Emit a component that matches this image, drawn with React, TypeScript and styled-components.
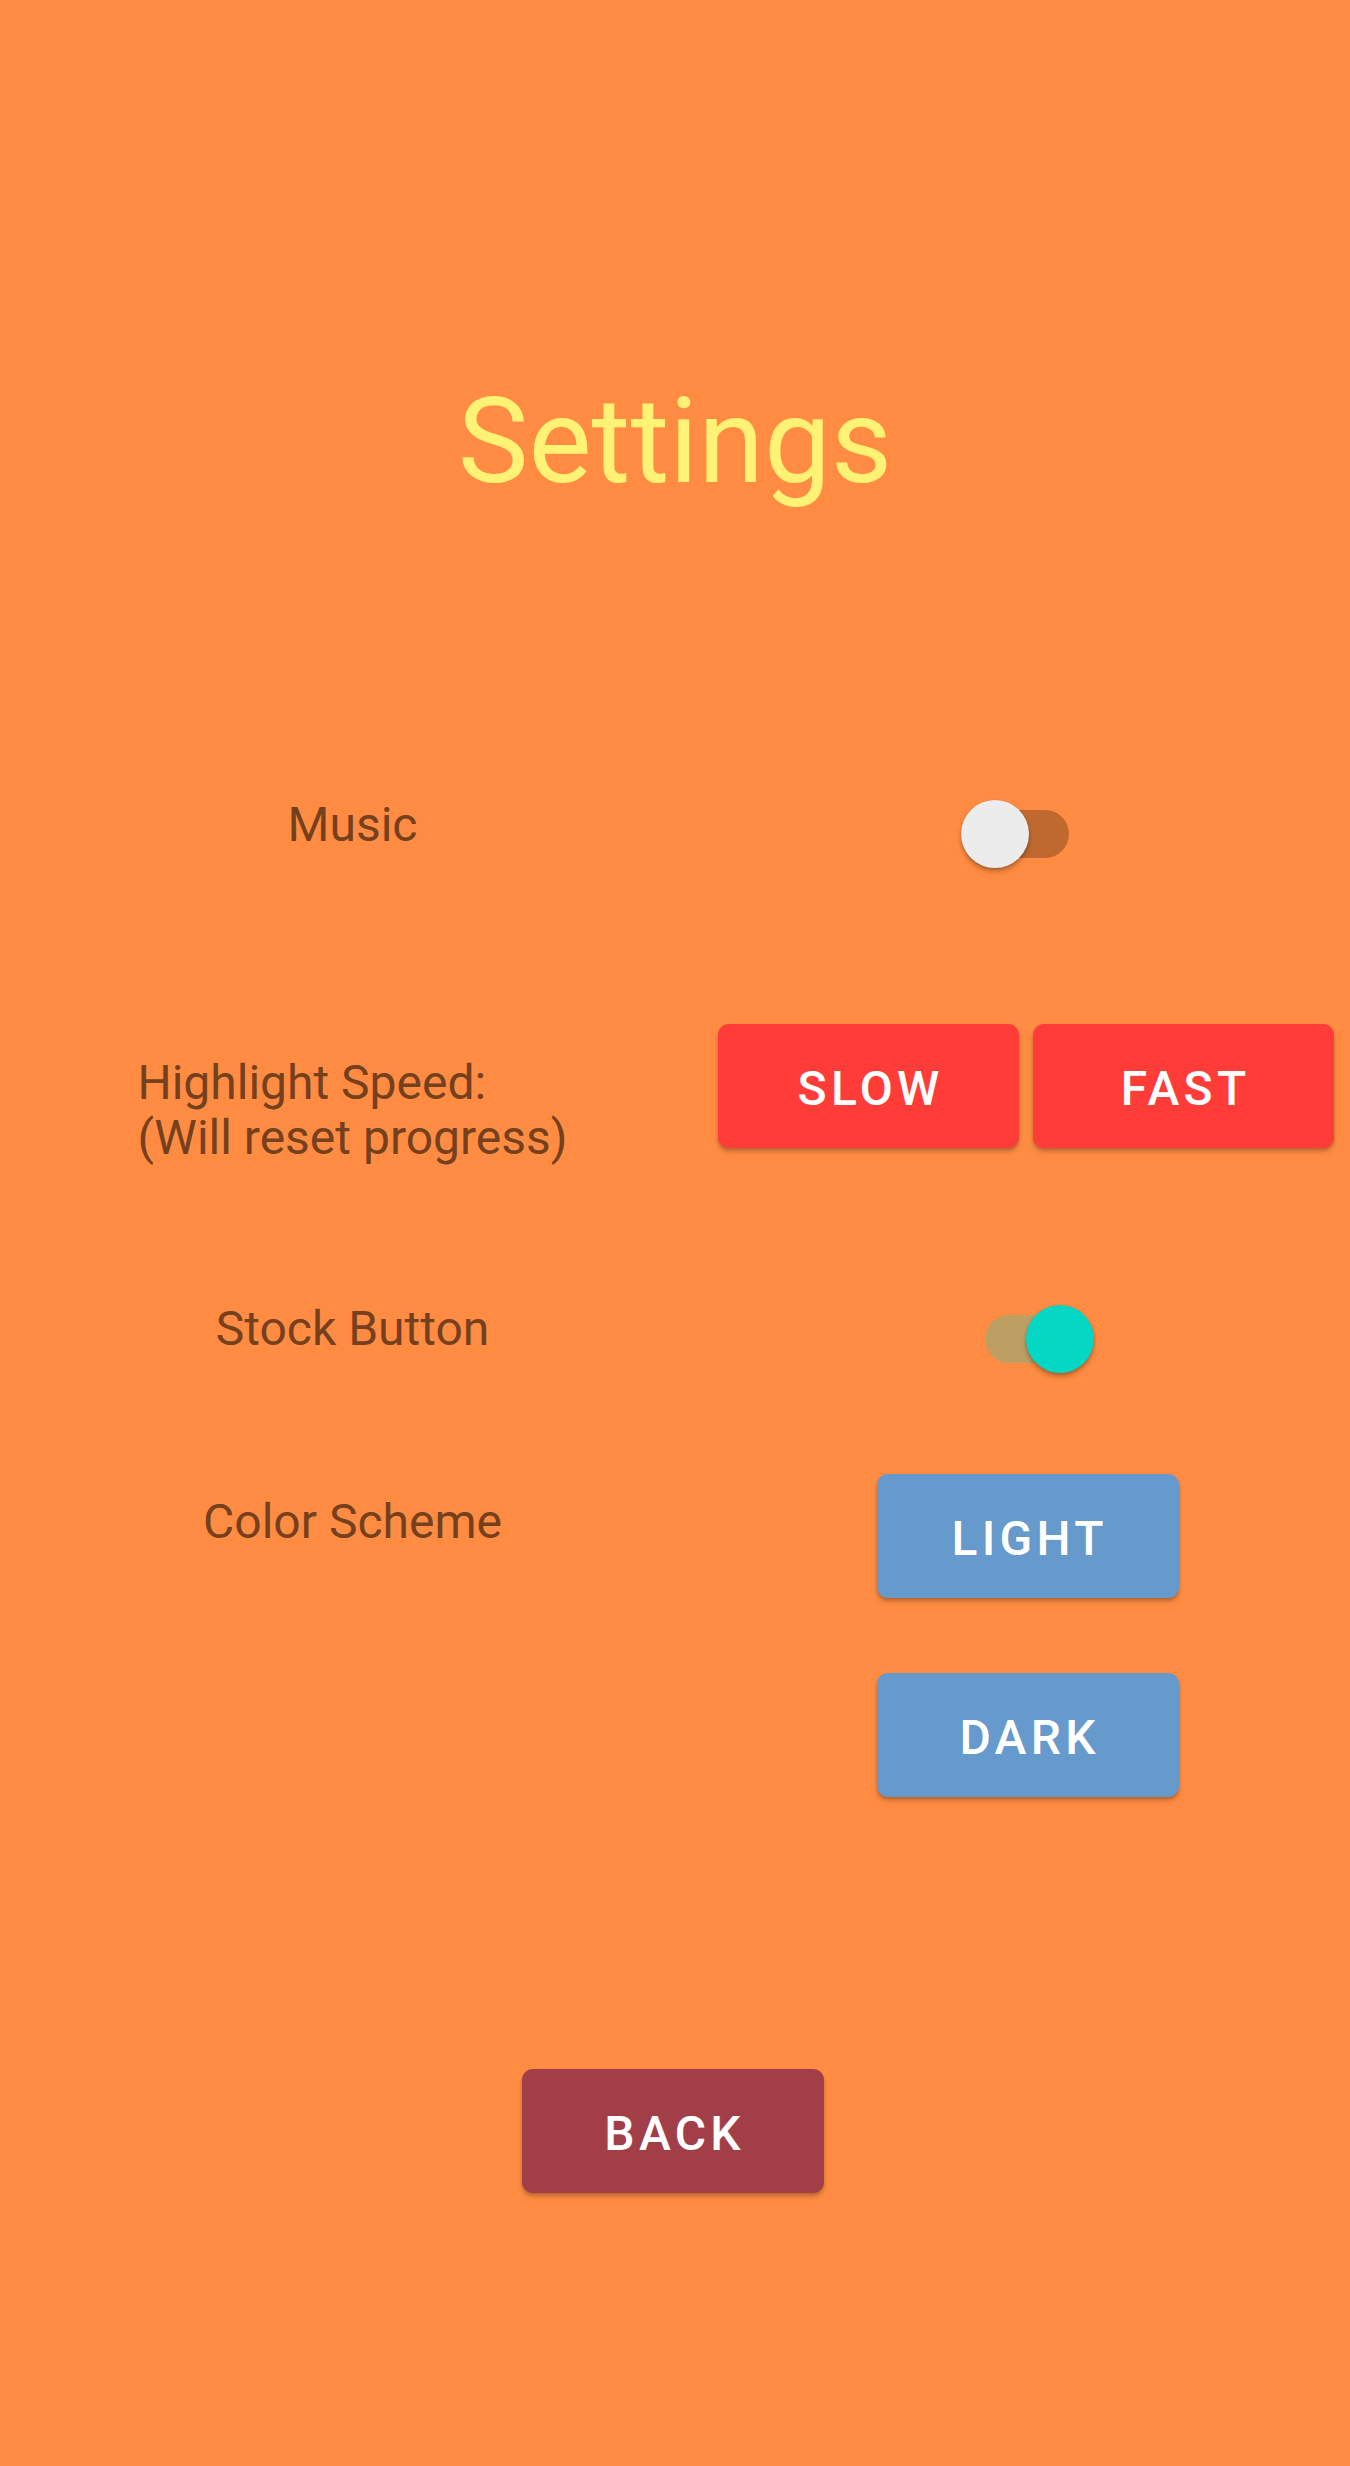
import React from "react";
import styled, { createGlobalStyle } from "styled-components";

const GlobalStyle = createGlobalStyle`
  html, body {
    margin: 0;
    padding: 0;
    background: #ff8c42;
  }
  body {
    font-family: Roboto, "Noto Sans", "Liberation Sans", sans-serif;
  }
  * { box-sizing: border-box; }
`;

const Page = styled.div`
  width: 1350px;
  min-height: 2466px;
  background: #ff8c42;
  display: flex;
  flex-direction: column;
`;

const Title = styled.h1`
  margin: 372px 0 0;
  height: 140px;
  font-size: 119px;
  line-height: 140px;
  font-weight: 400;
  color: #fff275;
  text-align: center;
`;

const Row = styled.div<{ $top: number }>`
  display: grid;
  grid-template-columns: 705px 1fr;
  align-items: start;
  margin-top: ${(p) => p.$top}px;
`;

const LabelCell = styled.div<{ $offset?: number }>`
  display: flex;
  justify-content: center;
  padding-top: ${(p) => p.$offset ?? 0}px;
`;

const Label = styled.div`
  font-size: 48px;
  line-height: 55px;
  color: #75401e;
  white-space: pre;
`;

const ControlCell = styled.div<{ $offset?: number }>`
  display: flex;
  flex-direction: column;
  align-items: center;
  padding-top: ${(p) => p.$offset ?? 0}px;
`;

const ButtonPair = styled.div`
  display: flex;
  gap: 14px;
  padding: 0 16px 0 13px;
`;

const ButtonStack = styled.div`
  display: flex;
  flex-direction: column;
  align-items: center;
  gap: 75px;
`;

const Button = styled.button<{ $bg: string; $wide?: boolean }>`
  flex: ${(p) => (p.$wide ? "1 1 0" : "0 0 auto")};
  width: ${(p) => (p.$wide ? "auto" : "302px")};
  height: 124px;
  border: none;
  border-radius: 11px;
  background: ${(p) => p.$bg};
  color: #ffffff;
  font-family: Roboto, "Noto Sans", "Liberation Sans", sans-serif;
  font-size: 48px;
  font-weight: 500;
  letter-spacing: 0.09em;
  text-transform: uppercase;
  display: flex;
  align-items: center;
  justify-content: center;
  padding: 4px 0 0 0.09em;
  box-shadow: 0 4px 5px rgba(0, 0, 0, 0.16), 0 2px 3px rgba(0, 0, 0, 0.14);
  cursor: pointer;
`;

const SwitchBox = styled.div`
  position: relative;
  width: 133px;
  height: 68px;
  display: flex;
  align-items: center;
`;

const Track = styled.div<{ $on: boolean }>`
  margin-left: 24px;
  width: 84px;
  height: 48px;
  border-radius: 24px;
  background: ${(p) => (p.$on ? "rgba(3, 218, 197, 0.26)" : "rgba(0, 0, 0, 0.25)")};
`;

const Thumb = styled.div<{ $on: boolean }>`
  position: absolute;
  top: 0;
  left: ${(p) => (p.$on ? "65px" : "0")};
  width: 68px;
  height: 68px;
  border-radius: 50%;
  background: ${(p) => (p.$on ? "#04d7c3" : "#ececec")};
  box-shadow: 0 4px 5px rgba(0, 0, 0, 0.22), 0 1px 3px rgba(0, 0, 0, 0.18);
`;

const Footer = styled.div`
  display: flex;
  justify-content: center;
  margin-top: 272px;
  padding-right: 5px;
`;

const Switch: React.FC<{ on: boolean }> = ({ on }) => (
  <SwitchBox>
    <Track $on={on} />
    <Thumb $on={on} />
  </SwitchBox>
);

export default function App() {
  return (
    <Page>
      <GlobalStyle />
      <Title>Settings</Title>

      <Row $top={285}>
        <LabelCell>
          <Label>Music</Label>
        </LabelCell>
        <ControlCell $offset={3}>
          <Switch on={false} />
        </ControlCell>
      </Row>

      <Row $top={156}>
        <LabelCell $offset={31}>
          <Label>{"Highlight Speed:\n(Will reset progress)"}</Label>
        </LabelCell>
        <ButtonPair>
          <Button $bg="#ff3c38" $wide>Slow</Button>
          <Button $bg="#ff3c38" $wide>Fast</Button>
        </ButtonPair>
      </Row>

      <Row $top={136}>
        <LabelCell>
          <Label>Stock Button</Label>
        </LabelCell>
        <ControlCell $offset={4}>
          <Switch on={true} />
        </ControlCell>
      </Row>

      <Row $top={101}>
        <LabelCell $offset={20}>
          <Label>Color Scheme</Label>
        </LabelCell>
        <ControlCell>
          <ButtonStack>
            <Button $bg="#6699cc">Light</Button>
            <Button $bg="#6699cc">Dark</Button>
          </ButtonStack>
        </ControlCell>
      </Row>

      <Footer>
        <Button $bg="#a23e48">Back</Button>
      </Footer>
    </Page>
  );
}
